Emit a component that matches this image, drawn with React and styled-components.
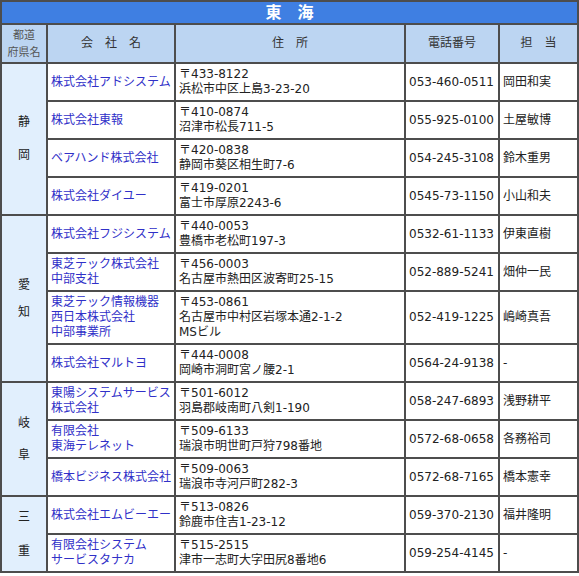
import React from 'react'
import styled, { createGlobalStyle } from 'styled-components'

const Global = createGlobalStyle`
  body {
    margin: 0;
    background: #fff;
    font-family: "DejaVu Sans", "Noto Sans CJK JP", sans-serif;
  }
`

const Table = styled.table`
  width: 579px;
  table-layout: fixed;
  border-collapse: collapse;
  border: 2px solid #4d4d4d;
  font-size: 12px;
  line-height: 15px;
  color: #222;
`

const TitleCell = styled.th`
  height: 21px;
  padding: 0;
  background: #3f7fe2;
  color: #fff;
  font-size: 16px;
  line-height: 18px;
  font-weight: bold;
  text-align: center;
  border: 2px solid #4d4d4d;
`

const HeadCell = styled.th`
  height: 37px;
  padding: 0;
  background: #bcd5f2;
  font-weight: normal;
  font-size: ${p => (p.$small ? '11px' : '12px')};
  line-height: ${p => (p.$small ? '17px' : '15px')};
  color: ${p => (p.$small ? '#555' : '#333')};
  text-align: center;
  border: 2px solid #4d4d4d;
`

const PrefCell = styled.td`
  background: #e1effd;
  text-align: center;
  vertical-align: middle;
  font-size: 12px;
  border: 2px solid #4d4d4d;
  padding: 0;
`

const PrefName = styled.div`
  display: flex;
  flex-direction: column;
  align-items: center;
  gap: ${p => p.$gap}px;
`

const Cell = styled.td`
  padding: 3px 3px;
  vertical-align: middle;
  border: 2px solid #4d4d4d;
  white-space: nowrap;
  overflow: hidden;
`

const CompanyCell = styled(Cell)`
  color: #3030c8;
`

const Line = styled.div``

const regions = [
  {
    pref: ['静', '岡'],
    gap: 18,
    rows: [
      { name: ['株式会社アドシステム'], addr: ['〒433-8122', '浜松市中区上島3-23-20'], tel: '053-460-0511', person: '岡田和実' },
      { name: ['株式会社東報'], addr: ['〒410-0874', '沼津市松長711-5'], tel: '055-925-0100', person: '土屋敏博' },
      { name: ['ベアハンド株式会社'], addr: ['〒420-0838', '静岡市葵区相生町7-6'], tel: '054-245-3108', person: '鈴木重男' },
      { name: ['株式会社ダイユー'], addr: ['〒419-0201', '富士市厚原2243-6'], tel: '0545-73-1150', person: '小山和夫' },
    ],
  },
  {
    pref: ['愛', '知'],
    gap: 12,
    rows: [
      { name: ['株式会社フジシステム'], addr: ['〒440-0053', '豊橋市老松町197-3'], tel: '0532-61-1133', person: '伊東直樹' },
      { name: ['東芝テック株式会社', '中部支社'], addr: ['〒456-0003', '名古屋市熱田区波寄町25-15'], tel: '052-889-5241', person: '畑仲一民' },
      { name: ['東芝テック情報機器', '西日本株式会社', '中部事業所'], addr: ['〒453-0861', '名古屋市中村区岩塚本通2-1-2', 'MSビル'], tel: '052-419-1225', person: '嶋崎真吾' },
      { name: ['株式会社マルトヨ'], addr: ['〒444-0008', '岡崎市洞町宮ノ腰2-1'], tel: '0564-24-9138', person: '-' },
    ],
  },
  {
    pref: ['岐', '阜'],
    gap: 17,
    rows: [
      { name: ['東陽システムサービス', '株式会社'], addr: ['〒501-6012', '羽島郡岐南町八剣1-190'], tel: '058-247-6893', person: '浅野耕平' },
      { name: ['有限会社', '東海テレネット'], addr: ['〒509-6133', '瑞浪市明世町戸狩798番地'], tel: '0572-68-0658', person: '各務裕司' },
      { name: ['橋本ビジネス株式会社'], addr: ['〒509-0063', '瑞浪市寺河戸町282-3'], tel: '0572-68-7165', person: '橋本憲幸' },
    ],
  },
  {
    pref: ['三', '重'],
    gap: 19,
    rows: [
      { name: ['株式会社エムビーエー'], addr: ['〒513-0826', '鈴鹿市住吉1-23-12'], tel: '059-370-2130', person: '福井隆明' },
      { name: ['有限会社システム', 'サービスタナカ'], addr: ['〒515-2515', '津市一志町大字田尻8番地6'], tel: '059-254-4145', person: '-' },
    ],
  },
]

function Lines({ items }) {
  return items.map(t => <Line key={t}>{t}</Line>)
}

export default function App() {
  return (
    <>
      <Global />
      <Table>
        <colgroup>
          <col style={{ width: 46 }} />
          <col style={{ width: 128 }} />
          <col style={{ width: 230 }} />
          <col style={{ width: 94 }} />
          <col />
        </colgroup>
        <thead>
          <tr>
            <TitleCell colSpan={5}>東　海</TitleCell>
          </tr>
          <tr>
            <HeadCell $small>都道<br />府県名</HeadCell>
            <HeadCell>会　社　名</HeadCell>
            <HeadCell>住　所</HeadCell>
            <HeadCell>電話番号</HeadCell>
            <HeadCell>担　当</HeadCell>
          </tr>
        </thead>
        <tbody>
          {regions.map(r =>
            r.rows.map((row, i) => (
              <tr key={row.tel}>
                {i === 0 && (
                  <PrefCell rowSpan={r.rows.length}>
                    <PrefName $gap={r.gap}>
                      <span>{r.pref[0]}</span>
                      <span>{r.pref[1]}</span>
                    </PrefName>
                  </PrefCell>
                )}
                <CompanyCell><Lines items={row.name} /></CompanyCell>
                <Cell><Lines items={row.addr} /></Cell>
                <Cell>{row.tel}</Cell>
                <Cell>{row.person}</Cell>
              </tr>
            ))
          )}
        </tbody>
      </Table>
    </>
  )
}
